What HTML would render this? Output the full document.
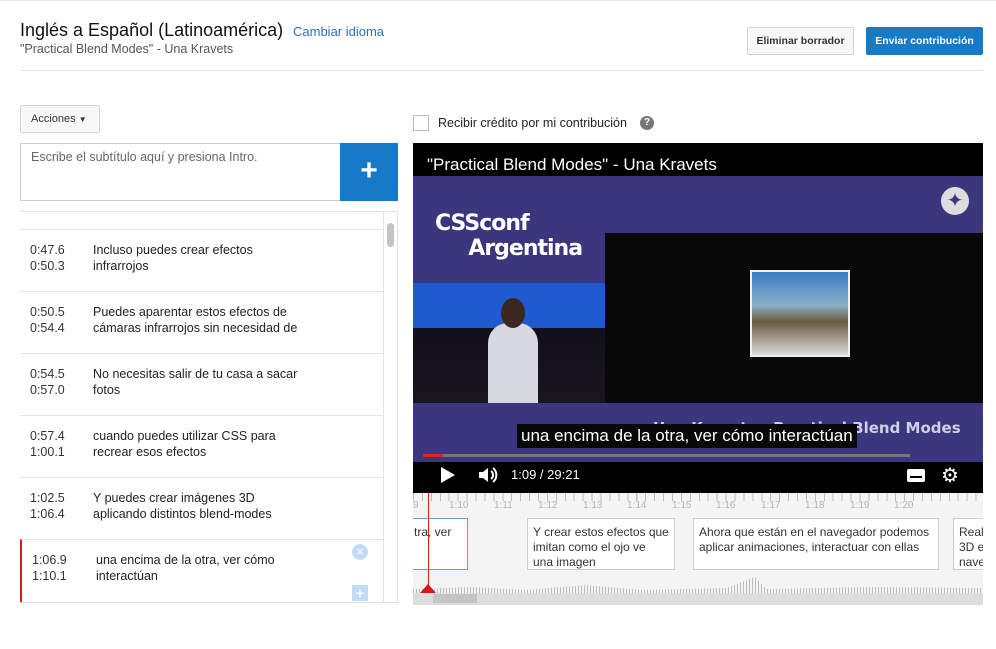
<!DOCTYPE html>
<html><head><meta charset="utf-8"><style>
*{box-sizing:border-box;margin:0;padding:0}
body{width:996px;height:649px;background:#fff;font-family:"Liberation Sans",sans-serif;position:relative;overflow:hidden;color:#222}
.a{position:absolute}
.row{position:absolute;left:20px;width:363px;height:62px;border-top:1px solid #e4e4e4;font-size:12.5px;color:#222}
.row .t{position:absolute;left:10px;top:12px;line-height:16px;color:#333}
.row .s{position:absolute;left:73px;top:12px;line-height:16px}
.tick{position:absolute;top:500px;font-size:10px;color:#b4b4b4}
.cap{position:absolute;top:518px;height:52px;background:#fff;border:1px solid #ccc;font-size:12px;line-height:15px;padding:6px 5px;color:#333;overflow:hidden;white-space:nowrap}
</style></head><body>
<div class="a" style="left:0;top:0;width:996px;height:1px;background:#e8e8e8"></div>
<div class="a" style="left:20px;top:20px;font-size:18px;color:#111">Inglés a Español (Latinoamérica)</div>
<div class="a" style="left:293px;top:24px;font-size:13px;color:#2a6fc0">Cambiar idioma</div>
<div class="a" style="left:20px;top:42px;font-size:12.5px;color:#555">"Practical Blend Modes" - Una Kravets</div>
<div class="a" style="left:747px;top:27px;width:107px;height:28px;border:1px solid #d3d3d3;background:#f8f8f8;border-radius:2px;font-size:10.5px;font-weight:bold;color:#333;text-align:center;line-height:26px">Eliminar borrador</div>
<div class="a" style="left:866px;top:27px;width:117px;height:28px;background:#167ac6;border-radius:2px;font-size:10.5px;font-weight:bold;color:#fff;text-align:center;line-height:28px">Enviar contribución</div>
<div class="a" style="left:20px;top:70px;width:963px;height:1px;background:#e2e2e2"></div>

<div class="a" style="left:20px;top:105px;width:80px;height:28px;border:1px solid #d3d3d3;background:#f8f8f8;border-radius:2px;font-size:11px;color:#333;line-height:26px;padding-left:10px">Acciones <span style="font-size:8px">▼</span></div>
<div class="a" style="left:413px;top:115px;width:16px;height:16px;border:1px solid #bbb;background:#fff"></div>
<div class="a" style="left:438px;top:116px;font-size:12.5px;color:#222">Recibir crédito por mi contribución</div>
<div class="a" style="left:640px;top:116px;width:14px;height:14px;border-radius:50%;background:#777;color:#fff;font-size:10px;font-weight:bold;text-align:center;line-height:14px">?</div>

<div class="a" style="left:20px;top:143px;width:321px;height:58px;border:1px solid #ccc"></div>
<div class="a" style="left:31px;top:150px;font-size:12.5px;color:#666">Escribe el subtítulo aquí y presiona Intro.</div>
<div class="a" style="left:340px;top:143px;width:58px;height:58px;background:#167ac6;color:#fff;font-size:30px;font-weight:bold;text-align:center;line-height:56px">+</div>

<div class="a" style="left:20px;top:211px;width:378px;height:392px;border-right:1px solid #e0e0e0"></div>
<div class="a" style="left:20px;top:211px;width:378px;height:1px;background:#e0e0e0"></div>
<div class="a" style="left:383px;top:211px;width:1px;height:392px;background:#e4e4e4"></div>
<div class="a" style="left:387px;top:223px;width:7px;height:24px;border-radius:4px;background:#c4c4c4"></div>
<div class="row" style="top:229px"><div class="t">0:47.6<br>0:50.3</div><div class="s">Incluso puedes crear efectos<br>infrarrojos</div></div>
<div class="row" style="top:291px"><div class="t">0:50.5<br>0:54.4</div><div class="s">Puedes aparentar estos efectos de<br>cámaras infrarrojos sin necesidad de</div></div>
<div class="row" style="top:353px"><div class="t">0:54.5<br>0:57.0</div><div class="s">No necesitas salir de tu casa a sacar<br>fotos</div></div>
<div class="row" style="top:415px"><div class="t">0:57.4<br>1:00.1</div><div class="s">cuando puedes utilizar CSS para<br>recrear esos efectos</div></div>
<div class="row" style="top:477px"><div class="t">1:02.5<br>1:06.4</div><div class="s">Y puedes crear imágenes 3D<br>aplicando distintos blend-modes</div></div>
<div class="row" style="top:539px;height:63px;border-left:2px solid #d21a1a"><div class="t" style="left:10px">1:06.9<br>1:10.1</div><div class="s" style="left:74px">una encima de la otra, ver cómo<br>interactúan</div>
<div class="a" style="left:330px;top:4px;width:16px;height:16px;border-radius:50%;background:#c3dcf5;color:#fff;font-size:13px;text-align:center;line-height:16px">×</div>
<div class="a" style="left:330px;top:45px;width:16px;height:16px;background:#c3dcf5;color:#fff;font-size:14px;font-weight:bold;text-align:center;line-height:16px">+</div></div>
<div class="a" style="left:20px;top:602px;width:378px;height:1px;background:#e0e0e0"></div>

<!-- video -->
<div class="a" style="left:413px;top:143px;width:570px;height:350px;background:#000;overflow:hidden">
 <div class="a" style="left:0;top:33px;width:570px;height:286px;background:#3c367f"></div>
 <div class="a" style="left:0;top:140px;width:192px;height:120px;background:linear-gradient(#1f5ad0 0,#1f5ad0 45px,#121018 45px,#1a1420 100%)"></div>
 <div class="a" style="left:192px;top:90px;width:378px;height:170px;background:#080808"></div>
 <div class="a" style="left:337px;top:127px;width:100px;height:87px;background:linear-gradient(#3b7bc4,#8bb0c8 40%,#6b5a40 60%,#dcdcdc);border:2px solid #eee"></div>
 <div class="a" style="left:75px;top:180px;width:50px;height:80px;background:#d8d8e0;border-radius:20px 20px 0 0"></div>
 <div class="a" style="left:88px;top:155px;width:24px;height:30px;background:#3a2820;border-radius:50%"></div>
 <div class="a" style="left:22px;top:68px;color:#fff;font-weight:bold;font-size:22px;line-height:25px;font-family:'DejaVu Sans',sans-serif;letter-spacing:-1px;white-space:nowrap">CSSconf<br>&nbsp;&nbsp;&nbsp;&nbsp;&nbsp;Argentina</div>
 <div class="a" style="left:528px;top:44px;width:28px;height:28px;border-radius:50%;background:#ddd;color:#3c367f;font-size:20px;text-align:center;line-height:28px">✦</div>
 <div class="a" style="left:240px;top:276px;color:#d0d0e4;font-weight:bold;font-size:15px;font-family:'DejaVu Sans',sans-serif;white-space:nowrap">Una Kravets - Practical Blend Modes</div>
 <div class="a" style="left:14px;top:12px;color:#fff;font-size:17px">"Practical Blend Modes" - Una Kravets</div>
 <div class="a" style="left:104px;top:281px;background:#080808;color:#fff;font-size:17px;padding:1px 4px;line-height:22px;white-space:nowrap">una encima de la otra, ver cómo interactúan</div>
 <div class="a" style="left:10px;top:311px;width:487px;height:3px;background:#777"></div>
 <div class="a" style="left:10px;top:311px;width:20px;height:3px;background:#e52121"></div>
 <div class="a" style="left:0;top:319px;width:570px;height:31px;background:#000"></div>
 <div class="a" style="left:28px;top:324px;width:0;height:0;border-left:14px solid #fff;border-top:8px solid transparent;border-bottom:8px solid transparent"></div>
 <svg class="a" style="left:64px;top:322px" width="22" height="20" viewBox="0 0 22 20"><path d="M2 7h4l5-4v14l-5-4H2z" fill="#fff"/><path d="M14 6a5 5 0 0 1 0 8M16 3a9 9 0 0 1 0 14" stroke="#fff" stroke-width="2" fill="none"/></svg>
 <div class="a" style="left:98px;top:324px;color:#fff;font-size:13px">1:09 / 29:21</div>
 <div class="a" style="left:494px;top:326px;width:18px;height:13px;background:#fff;border-radius:2px"><div style="position:absolute;left:3px;top:7px;width:12px;height:2px;background:#000"></div></div>
 <div class="a" style="left:528px;top:320px;color:#fff;font-size:20px">⚙</div>
</div>

<!-- timeline -->
<div class="a" style="left:413px;top:493px;width:570px;height:112px;background:#f4f4f4;overflow:hidden">
 <div class="a" style="left:0;top:0;width:570px;height:8px;background:repeating-linear-gradient(90deg,#bbb 0 1px,transparent 1px 8.93px)"></div>
 <div class="a" style="left:0;top:80px;width:570px;height:20px;background:repeating-linear-gradient(90deg,#bbb 0 1px,transparent 1px 3px);clip-path:polygon(0 80%,10% 70%,20% 85%,30% 60%,40% 85%,55% 75%,60% 20%,62% 80%,80% 70%,100% 75%,100% 100%,0 100%)"></div>
 <div class="a" style="left:0;top:100px;width:570px;height:12px;background:#ddd"></div>
 <div class="a" style="left:20px;top:101px;width:44px;height:9px;background:#c4c4c4"></div>
</div>
<div class="tick" style="left:413px">9</div>
<div class="tick" style="left:449px">1:10</div><div class="tick" style="left:494px">1:11</div><div class="tick" style="left:538px">1:12</div><div class="tick" style="left:583px">1:13</div><div class="tick" style="left:627px">1:14</div><div class="tick" style="left:672px">1:15</div><div class="tick" style="left:716px">1:16</div><div class="tick" style="left:761px">1:17</div><div class="tick" style="left:805px">1:18</div><div class="tick" style="left:850px">1:19</div><div class="tick" style="left:894px">1:20</div>
<div class="cap" style="left:413px;width:55px;border-color:#6c9ad8;border-left:none;padding-left:1px">tra, ver</div>
<div class="cap" style="left:527px;width:148px">Y crear estos efectos que<br>imitan como el ojo ve<br>una imagen</div>
<div class="cap" style="left:693px;width:246px">Ahora que están en el navegador podemos<br>aplicar animaciones, interactuar con ellas</div>
<div class="cap" style="left:953px;width:30px;border-right:none">Real<br>3D e<br>nave</div>
<div class="a" style="left:428px;top:493px;width:1px;height:100px;background:#e02020"></div>
<div class="a" style="left:420px;top:584px;width:0;height:0;border-left:8px solid transparent;border-right:8px solid transparent;border-bottom:9px solid #d21a1a"></div>
</body></html>
